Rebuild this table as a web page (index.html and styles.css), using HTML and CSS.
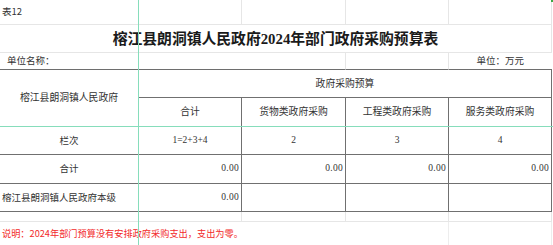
FILE: index.html
```html
<!DOCTYPE html>
<html lang="zh-CN">
<head>
<meta charset="utf-8">
<title>榕江县朗洞镇人民政府2024年部门政府采购预算表</title>
<link rel="stylesheet" href="styles.css">
</head>
<body>
<div class="sheet">
  <table class="grid">
    <colgroup>
      <col class="c1"><col class="c2"><col class="c3"><col class="c4"><col class="c5">
    </colgroup>
    <tr class="r-top">
      <td class="g tag">表12</td><td class="g"></td><td class="g"></td><td class="g"></td><td class="g"></td>
    </tr>
    <tr class="r-title">
      <td colspan="5" class="g title">榕江县朗洞镇人民政府2024年部门政府采购预算表</td>
    </tr>
    <tr class="r-unit">
      <td colspan="2" class="u unit-name">单位名称：</td><td class="u ug"></td><td class="u ug"></td><td class="u unit">单位：万元</td>
    </tr>
    <tr class="r-h1">
      <td rowspan="2" class="t hd org">榕江县朗洞镇人民政府</td>
      <td colspan="4" class="t hd">政府采购预算</td>
    </tr>
    <tr class="r-h2">
      <td class="t hd">合计</td><td class="t hd">货物类政府采购</td><td class="t hd">工程类政府采购</td><td class="t hd">服务类政府采购</td>
    </tr>
    <tr class="r-seq">
      <td class="t ctr">栏次</td><td class="t ctr num">1=2+3+4</td><td class="t ctr num">2</td><td class="t ctr num">3</td><td class="t ctr num">4</td>
    </tr>
    <tr class="r-sum">
      <td class="t ctr">合计</td><td class="t val">0.00</td><td class="t val">0.00</td><td class="t val">0.00</td><td class="t val">0.00</td>
    </tr>
    <tr class="r-org">
      <td class="t lft">榕江县朗洞镇人民政府本级</td><td class="t val">0.00</td><td class="t"></td><td class="t"></td><td class="t"></td>
    </tr>
    <tr class="r-gap">
      <td class="g"></td><td class="g"></td><td class="g"></td><td class="g"></td><td class="g"></td>
    </tr>
    <tr class="r-note">
      <td colspan="3" class="note">说明：2024年部门预算没有安排政府采购支出，支出为零。</td><td class="gv"></td><td class="gv"></td>
    </tr>
  </table>
  <div class="freeze-v"></div>
  <div class="freeze-h"></div>
  <div class="corner"></div>
</div>
</body>
</html>
```

FILE: styles.css
```css
html, body {
  margin: 0;
  padding: 0;
  background: #ffffff;
}

.sheet {
  position: relative;
  width: 553px;
  height: 245px;
  overflow: hidden;
  font-family: "Noto Sans CJK SC", "Liberation Sans", sans-serif;
  color: #333333;
}

.grid {
  table-layout: fixed;
  border-collapse: separate;
  border-spacing: 0;
  width: 552px;
}

.c1 { width: 139px; }
.c2 { width: 103px; }
.c3 { width: 104px; }
.c4 { width: 103px; }
.c5 { width: 103px; }

.grid td {
  box-sizing: border-box;
  padding: 0;
  white-space: nowrap;
  vertical-align: middle;
  font-size: 9.5px;
  line-height: 1;
}

.r-top { height: 25px; }
.r-title { height: 28px; }
.r-unit { height: 17px; }
.r-h1 { height: 28px; }
.r-h2 { height: 29px; }
.r-seq { height: 28px; }
.r-sum { height: 29px; }
.r-org { height: 28px; }
.r-gap { height: 10px; }
.r-note { height: 23px; }

/* faint spreadsheet gridlines */
.g {
  border-right: 1px solid #e6e6e6;
  border-bottom: 1px solid #e6e6e6;
}
.gv {
  border-right: 1px solid #ededed;
}
.u {
  border-bottom: 1px solid #6e6e6e;
}
.ug {
  border-right: 1px solid #e6e6e6;
}

/* table cells */
.t {
  border-right: 1px solid #707070;
  border-bottom: 1px solid #707070;
}

.tag {
  padding-left: 2px !important;
  font-size: 9.5px;
}

.title {
  text-align: center;
  font-family: "Liberation Serif", "Noto Sans CJK SC", serif;
  font-weight: 700;
  font-size: 14.8px !important;
  color: #1a1a1a;
  padding-top: 2px !important;
}

.unit-name {
  padding-left: 7px !important;
  font-size: 9.5px;
}

.unit {
  text-align: right;
  padding-right: 28px !important;
}

.hd {
  text-align: center;
  font-size: 9.8px !important;
}

.org {
  padding-bottom: 1px !important;
}

.ctr {
  text-align: center;
}

.num, .val {
  font-family: "Liberation Serif", "Noto Sans CJK SC", serif;
  font-size: 9.5px !important;
}

.val {
  text-align: right;
  padding-right: 2px !important;
  letter-spacing: 0.3px;
}

.lft {
  text-align: left;
  padding-left: 2px !important;
}

.note {
  color: #f22a2a;
  padding-left: 2px !important;
  font-size: 9.2px !important;
}
.note {
  font-family: "Noto Sans CJK SC", sans-serif;
}

/* freeze-pane markers drawn over the grid */
.freeze-v {
  position: absolute;
  left: 138px;
  top: 0;
  width: 1px;
  height: 245px;
  background: #86ddbb;
}
.freeze-h {
  position: absolute;
  left: 0;
  top: 126px;
  width: 553px;
  height: 1px;
  background: #86ddbb;
}
.corner {
  position: absolute;
  right: 0;
  top: 0;
  width: 2px;
  height: 2px;
  background: #3aa845;
}
```
